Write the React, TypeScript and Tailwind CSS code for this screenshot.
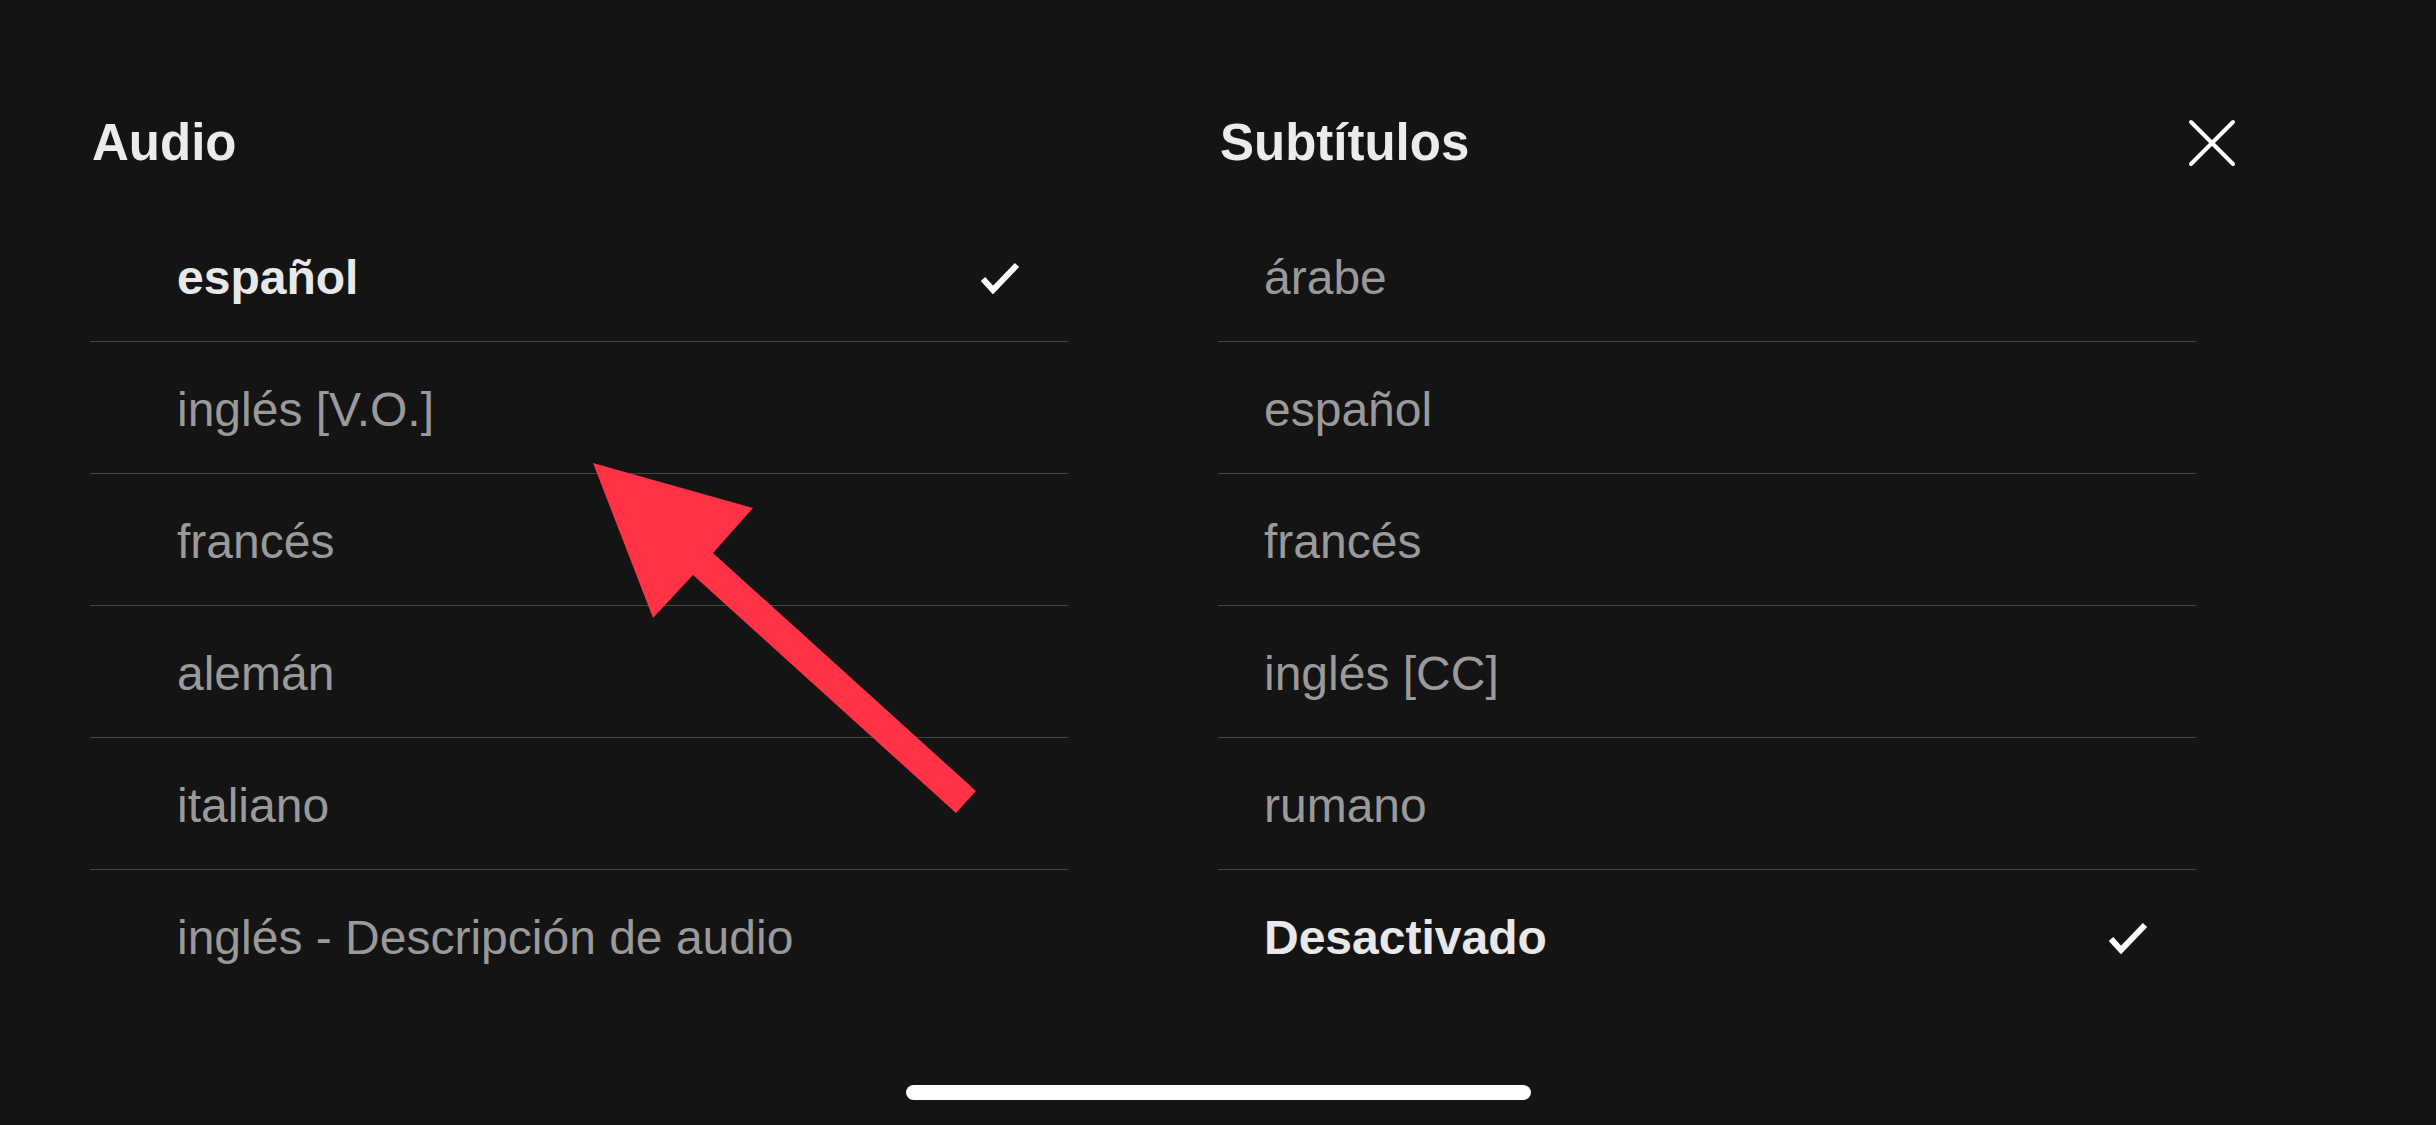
import React from 'react';

const audio = [
  { label: 'español', selected: true },
  { label: 'inglés [V.O.]' },
  { label: 'francés' },
  { label: 'alemán' },
  { label: 'italiano' },
  { label: 'inglés - Descripción de audio' },
];

const subtitles = [
  { label: 'árabe' },
  { label: 'español' },
  { label: 'francés' },
  { label: 'inglés [CC]' },
  { label: 'rumano' },
  { label: 'Desactivado', selected: true },
];

type Option = { label: string; selected?: boolean };

const Check = () => (
  <svg width="40" height="32" viewBox="0 0 40 32" fill="none">
    <path d="M3 17 L13 28 L37 3" stroke="#ffffff" strokeWidth="6" strokeLinejoin="miter" />
  </svg>
);

const OptionList: React.FC<{ items: Option[]; indent: string }> = ({ items, indent }) => (
  <ul className="w-[978px]">
    {items.map((item, index) => (
      <li
        key={index}
        className={`flex h-[132px] items-center justify-between pr-[48px] pt-[5px] ${indent} ${
          index > 0 ? 'border-t border-[#454545]' : ''
        }`}
      >
        <span
          className={
            item.selected
              ? 'text-[48px] font-bold text-[#e8e8e8]'
              : 'text-[48px] text-[#9a9a9a]'
          }
        >
          {item.label}
        </span>
        {item.selected && <Check />}
      </li>
    ))}
  </ul>
);

export default function App() {
  return (
    <div
      className="relative h-[1125px] w-[2436px] overflow-hidden bg-[#141414]"
      style={{ fontFamily: '"Liberation Sans", Arial, sans-serif' }}
    >
      <div className="flex gap-[150px] pl-[90px] pt-[113px]">
        <section>
          <h2 className="h-[60px] pl-[2px] text-[51px] font-bold leading-[60px] text-[#ebebeb]">Audio</h2>
          <div className="mt-[36px]">
            <OptionList items={audio} indent="pl-[87px]" />
          </div>
        </section>

        <section>
          <div className="flex h-[60px] w-[1019px] items-center justify-between">
            <h2 className="pl-[2px] text-[51px] font-bold leading-[60px] text-[#ebebeb]">Subtítulos</h2>
            <button className="flex h-[50px] w-[50px] items-center justify-center" aria-label="Cerrar">
              <svg width="48" height="48" viewBox="0 0 48 48" fill="none">
                <path d="M3 3 L45 45 M45 3 L3 45" stroke="#ffffff" strokeWidth="4" strokeLinecap="round" />
              </svg>
            </button>
          </div>
          <div className="mt-[36px]">
            <OptionList items={subtitles} indent="pl-[46px]" />
          </div>
        </section>
      </div>

      {/* red annotation arrow */}
      <svg className="pointer-events-none absolute left-0 top-0" width="2436" height="1125">
        <polygon
          points="593,463 753,508 713,553 976,791 956,813 693,575 653,618"
          fill="#ff3246"
        />
      </svg>

      <div className="absolute bottom-[25px] left-[906px] h-[15px] w-[625px] rounded-full bg-white" />
    </div>
  );
}
